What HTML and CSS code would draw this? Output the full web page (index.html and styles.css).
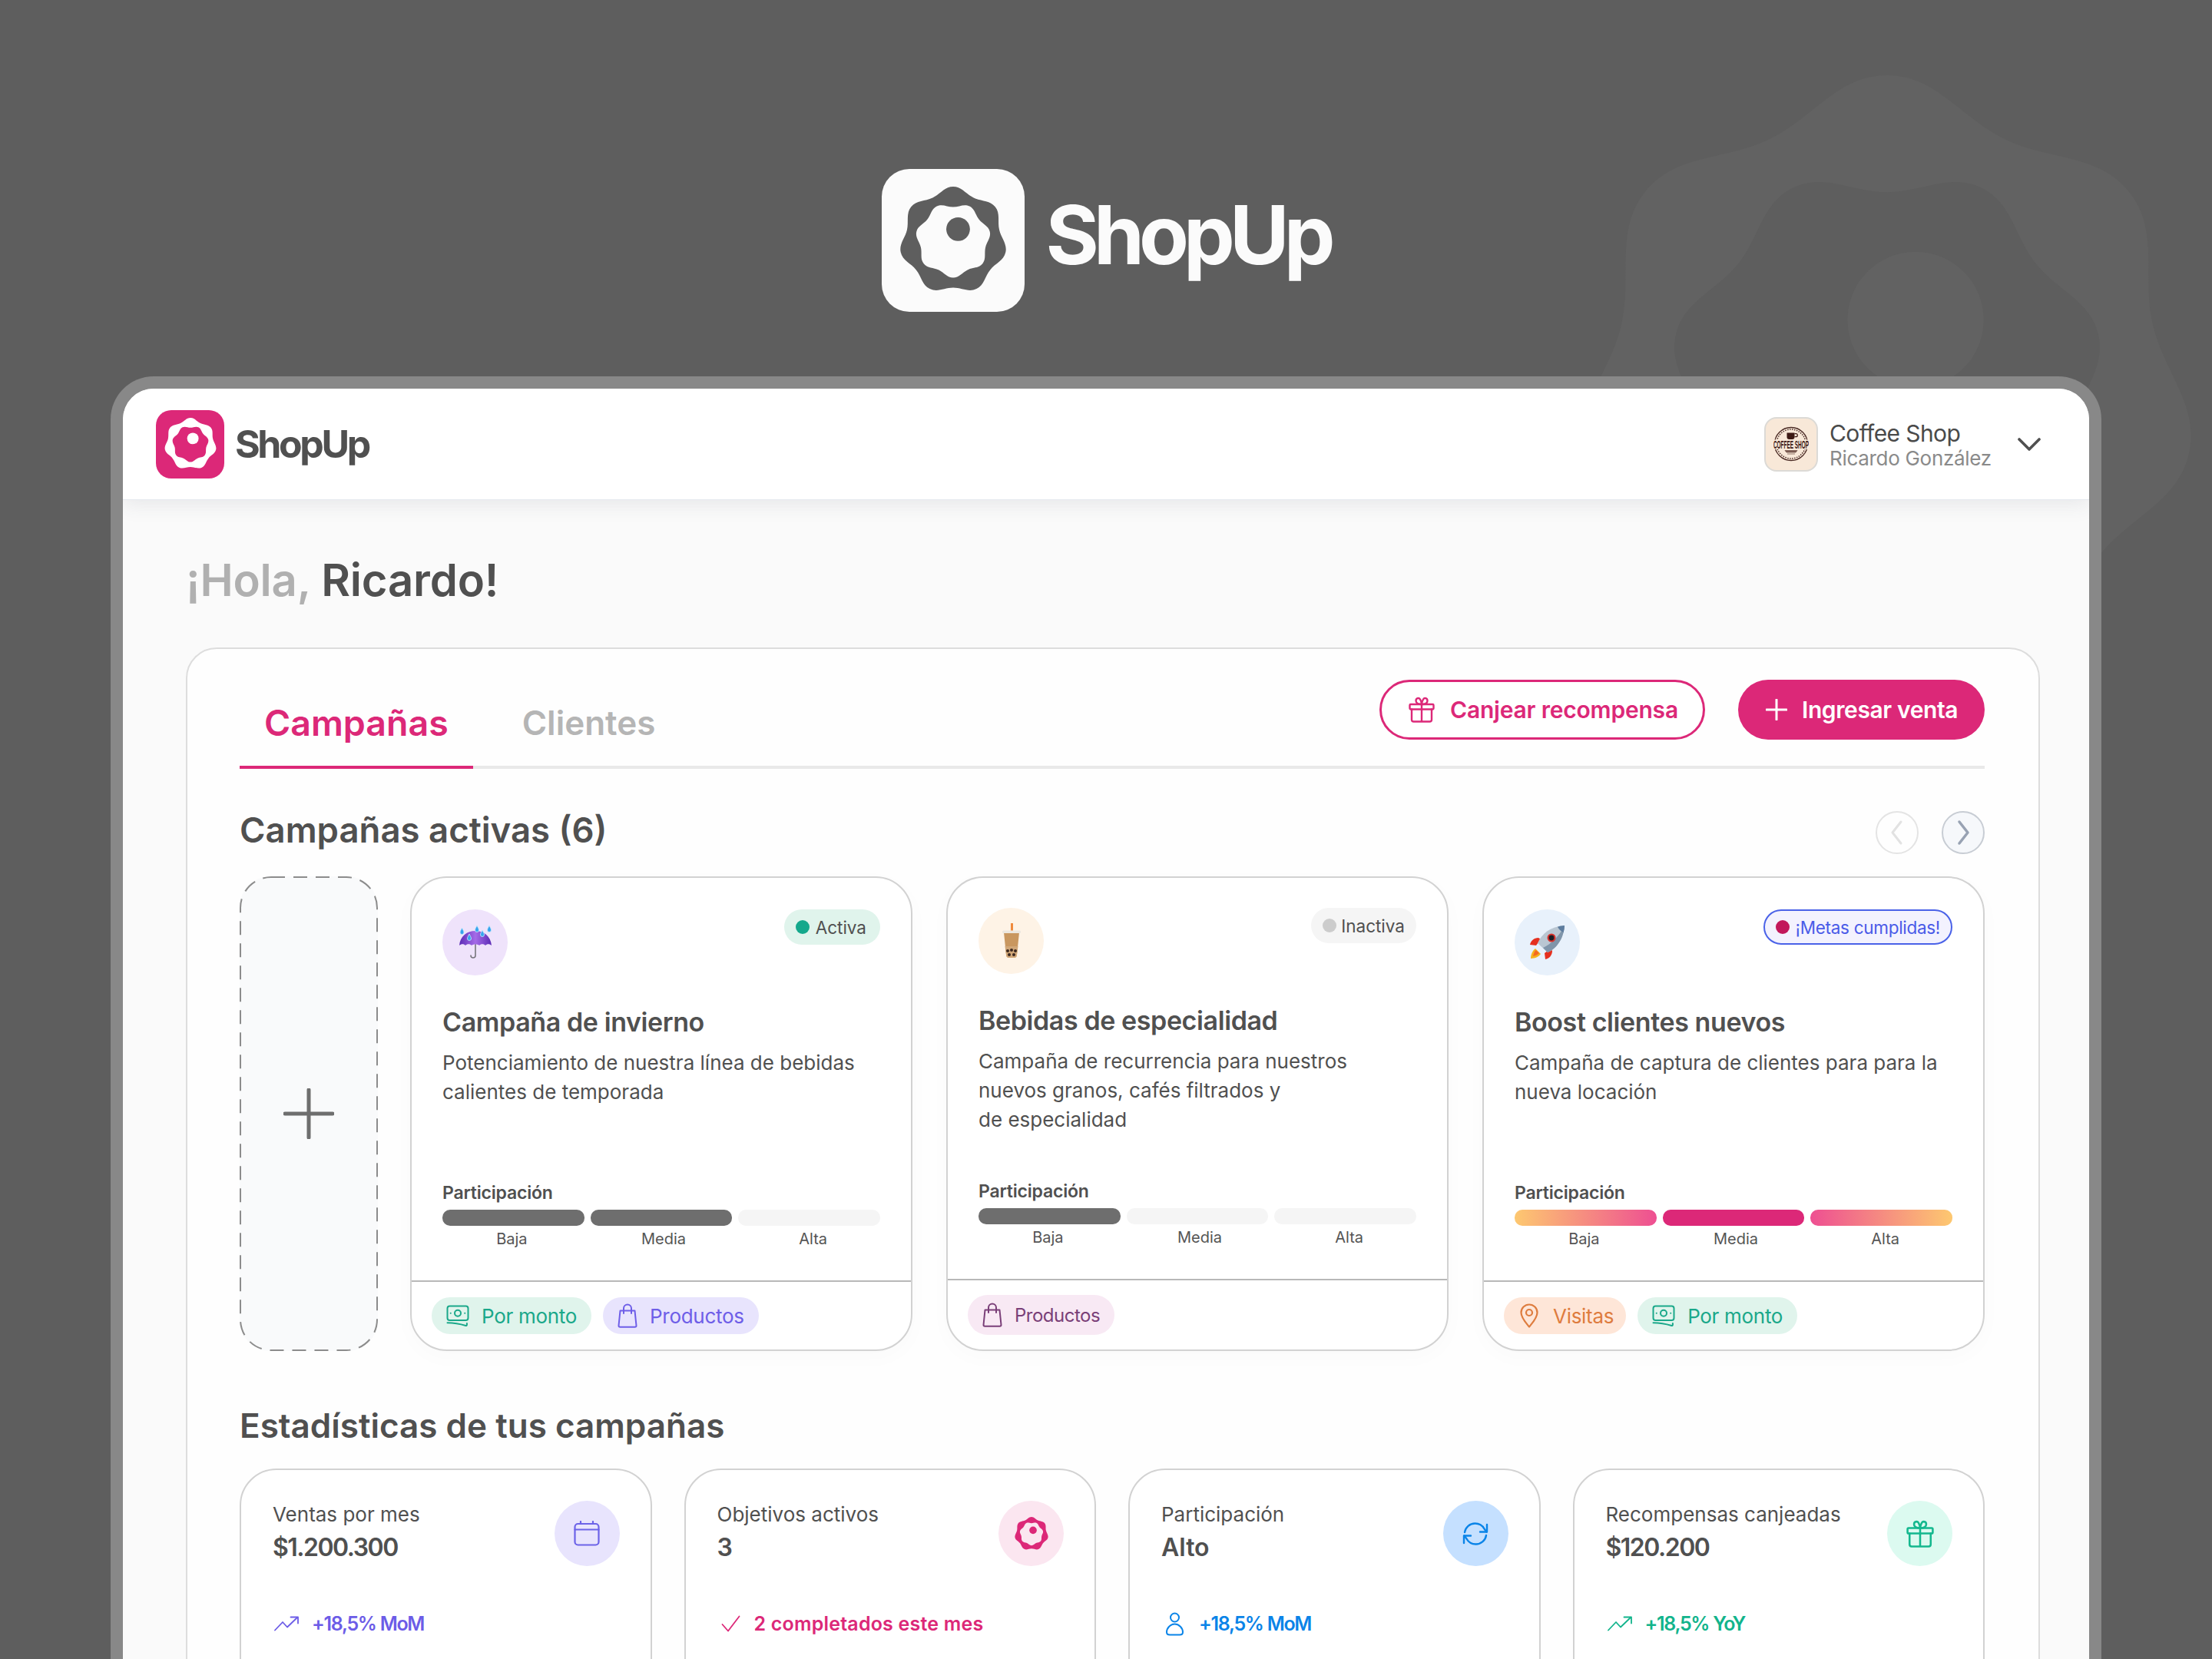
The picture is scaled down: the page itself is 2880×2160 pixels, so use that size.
FILE: index.html
```html
<!DOCTYPE html>
<html lang="es">
<head>
  <meta charset="UTF-8">
  <meta name="viewport" content="width=device-width, initial-scale=1.0">
  <title>ShopUp</title>
  <link rel="stylesheet" href="styles.css">
</head>
<body>
  <svg class="sprites" width="0" height="0">
    <defs>
      <path id="flowerShape" d="M50 0C58 0 61.88 6.89 69.09 10.36C76.3 13.83 84.1 12.57 89.09 18.82C94.08 25.07 91.12 32.41 92.9 40.21C94.68 48.01 100.53 53.33 98.75 61.13C96.97 68.93 89.39 71.18 84.4 77.43C79.41 83.68 78.91 91.58 71.7 95.05C64.49 98.52 58 94 50 94C42 94 35.51 98.52 28.3 95.05C21.09 91.58 20.59 83.68 15.6 77.43C10.61 71.18 3.03 68.93 1.25 61.13C-.53 53.33 5.32 48.01 7.1 40.21C8.88 32.41 5.92 25.07 10.91 18.82C15.9 12.57 23.7 13.83 30.91 10.36C38.12 6.89 42 0 50 0Z"/>
      <symbol id="flower" viewBox="0 0 100 100">
        <use href="#flowerShape" fill="currentColor"/>
        <use href="#flowerShape" class="flower-inner" transform="translate(50 49.7) rotate(180) scale(.7) translate(-50 -50)"/>
        <circle cx="54.6" cy="39.5" r="11" fill="currentColor"/>
      </symbol>
      <symbol id="gift" viewBox="0 0 34 34">
        <g fill="none" stroke="currentColor" stroke-width="2.4" stroke-linejoin="round" stroke-linecap="round">
          <rect x="1.5" y="10" width="31" height="6.5" rx="1.2"/>
          <path d="M4 16.500V30a2.500 2.500 0 0 0 2.500 2.500h21A2.500 2.500 0 0 0 30 30V16.500M17 10v22.500"/>
          <path d="M17 10C13 10 9.500 8.500 9.500 5.200S13.500 1 15 3.500 17 10 17 10ZM17 10c4 0 7.500-1.500 7.500-4.800S20.500 1 19 3.500 17 10 17 10Z"/>
        </g>
      </symbol>
      <symbol id="money" viewBox="0 0 30 29">
        <g fill="none" stroke="currentColor" stroke-width="2" stroke-linecap="round" stroke-linejoin="round">
          <rect x="1.500" y="1.500" width="27" height="18.500" rx="3"/>
          <circle cx="15" cy="10.700" r="4"/>
          <path d="M5.700 10.700h.1M24.200 10.700h.1M1.500 23.200c8 0 16 1.300 24 3.800.8.200 1.400-.4 1.400-1.300v-1.700"/>
        </g>
      </symbol>
      <symbol id="bag" viewBox="0 0 26 32">
        <g fill="none" stroke="currentColor" stroke-width="2" stroke-linecap="round" stroke-linejoin="round">
          <path d="M3.500 9.500h19l2 19.500a1.800 1.800 0 0 1-1.800 1.800H3.300A1.800 1.800 0 0 1 1.500 29Z"/>
          <path d="M8 13V6.500a5 5 0 0 1 10 0V13"/>
        </g>
      </symbol>
      <symbol id="pin" viewBox="0 0 24 32">
        <g fill="none" stroke="currentColor" stroke-width="2.200" stroke-linejoin="round">
          <path d="M12 30.500C8 25.500 1.500 19 1.500 12a10.500 10.500 0 0 1 21 0C22.500 19 16 25.500 12 30.500Z"/>
          <circle cx="12" cy="12" r="4"/>
        </g>
      </symbol>
      <symbol id="trend" viewBox="0 0 33 20">
        <g fill="none" stroke="currentColor" stroke-width="1.800" stroke-linecap="round" stroke-linejoin="round">
          <path d="M1 18.500 11 8l6 6.500L30 2"/>
          <path d="M21.500 1.500H31v8"/>
        </g>
      </symbol>
    </defs>
  </svg>

  <svg class="watermark"><use href="#flower"/></svg>

  <header class="hero">
    <div class="hero-tile"><svg class="hero-flower"><use href="#flower"/></svg></div>
    <span class="hero-word">ShopUp</span>
  </header>

  <div class="frame">
    <div class="topbar">
      <div class="brand">
        <div class="brand-tile"><svg class="brand-flower"><use href="#flower"/></svg></div>
        <span class="brand-word">ShopUp</span>
      </div>
      <div class="account">
        <div class="avatar">
          <svg viewBox="0 0 46 46" width="46" height="46">
            <circle cx="23" cy="23" r="21.500" fill="none" stroke="#4a2a24" stroke-width="1.300"/>
            <circle cx="23" cy="23" r="19" fill="none" stroke="#4a2a24" stroke-width="1.500" stroke-dasharray="1.500 1.500"/>
            <rect x="0" y="17.500" width="46" height="12.500" fill="#f8e8d8"/>
            <path d="M17.500 8.500h10v5.500a3 3 0 0 1-3 3h-4a3 3 0 0 1-3-3Z" fill="#3d1a14"/>
            <path d="M27.500 9.700h1.800a1.800 1.800 0 0 1 0 4h-1.800" fill="none" stroke="#3d1a14" stroke-width="1.200"/>
            <text class="avatar-text" text-anchor="middle" transform="translate(23 28.500) scale(.46 1)">COFFEE SHOP</text>
            <path d="M15 31.500h16l-2 2.500h-12ZM18 36h10" fill="#7a5a50" stroke="#7a5a50" stroke-width=".8"/>
          </svg>
        </div>
        <div class="account-text">
          <div class="account-shop">Coffee Shop</div>
          <div class="account-user">Ricardo González</div>
        </div>
        <svg class="account-chevron" viewBox="0 0 30 17"><path d="M2 2 15 15 28 2" fill="none" stroke="currentColor" stroke-width="3.600" stroke-linecap="round" stroke-linejoin="round"/></svg>
      </div>
    </div>

    <main class="content">
      <h1 class="greeting"><span class="greeting-soft">¡Hola,</span> Ricardo!</h1>

      <section class="panel">
        <div class="tabbar">
          <nav class="tabs">
            <a class="tab tab-active">Campañas</a>
            <a class="tab">Clientes</a>
          </nav>
          <div class="actions">
            <button class="btn btn-outline"><svg class="btn-gift"><use href="#gift"/></svg>Canjear recompensa</button>
            <button class="btn btn-solid">
              <svg class="btn-plus" viewBox="0 0 28 28"><path d="M14 1v26M1 14h26" fill="none" stroke="currentColor" stroke-width="3" stroke-linecap="round"/></svg>
              Ingresar venta
            </button>
          </div>
        </div>

        <div class="section-head">
          <h2 class="section-title campaigns-title">Campañas activas (6)</h2>
          <div class="pager">
            <span class="pager-btn pager-off"><svg viewBox="0 0 20 34"><path d="M15 3 4 17l11 14" fill="none" stroke="currentColor" stroke-width="3" stroke-linecap="round" stroke-linejoin="round"/></svg></span>
            <span class="pager-btn pager-on"><svg viewBox="0 0 20 34"><path d="M5 3l11 14L5 31" fill="none" stroke="currentColor" stroke-width="3.500" stroke-linecap="round" stroke-linejoin="round"/></svg></span>
          </div>
        </div>

        <div class="campaigns">
          <div class="add-card">
            <svg class="add-border"><rect x="1" y="1" width="178" height="616" rx="40" ry="40"/></svg>
            <svg class="add-plus" viewBox="0 0 66 66"><path d="M33 2v62M2 33h62" fill="none" stroke="currentColor" stroke-width="5" stroke-linecap="round"/></svg>
          </div>

          <article class="card">
            <div class="card-body">
              <div class="card-top">
                <div class="emoji emoji-purple">
                  <svg viewBox="0 0 44 44" width="44" height="44">
                    <defs><linearGradient id="umb" x1="0" y1="0" x2="1" y2="0"><stop offset="0" stop-color="#5b2bb5"/><stop offset=".5" stop-color="#a56be8"/><stop offset="1" stop-color="#5b2bb5"/></linearGradient></defs>
                    <path d="M22 24v15a3 3 0 0 1-6 0" fill="none" stroke="#77757c" stroke-width="1.600" stroke-linecap="round"/>
                    <path d="M1 26C2 14 11 7 22 7s20 7 21 19c-2.500-2.500-6-2.500-8 0-2-2.500-6-2.500-8 0-1.500-2-8.500-2-10 0-2-2.500-6-2.500-8 0-2-2.500-5.500-2.500-8 0Z" fill="url(#umb)"/>
                    <g fill="#35a4ee" stroke="#cdeafc" stroke-width=".8">
                      <path d="M4.500 3C3 6 2 7.500 2 9a2.500 2.500 0 0 0 5 0c0-1.500-1-3-2.500-6Z"/>
                      <path d="M24 0c-1.500 3-2.500 4.500-2.500 6a2.500 2.500 0 0 0 5 0c0-1.500-1-3-2.500-6Z"/>
                      <path d="M40 0c-1.500 3-2.500 4.500-2.500 6a2.500 2.500 0 0 0 5 0c0-1.500-1-3-2.500-6Z"/>
                      <path d="M14 11c-1.500 3-2.500 4.500-2.500 6a2.500 2.500 0 0 0 5 0c0-1.500-1-3-2.500-6Z"/>
                      <path d="M31 6c-1.500 3-2.500 4.500-2.500 6a2.500 2.500 0 0 0 5 0c0-1.500-1-3-2.500-6Z"/>
                    </g>
                  </svg>
                </div>
                <span class="status status-on"><i class="status-dot"></i>Activa</span>
              </div>
              <h3 class="card-title">Campaña de invierno</h3>
              <p class="card-desc">Potenciamiento de nuestra línea de bebidas<br>calientes de temporada</p>
              <div class="meter">
                <div class="meter-title">Participación</div>
                <div class="meter-bars"><span class="bar bar-gray"></span><span class="bar bar-gray"></span><span class="bar"></span></div>
                <div class="meter-labels"><span>Baja</span><span>Media</span><span>Alta</span></div>
              </div>
            </div>
            <div class="card-foot">
              <span class="tag tag-green"><svg class="tag-money"><use href="#money"/></svg>Por monto</span>
              <span class="tag tag-violet"><svg class="tag-bag"><use href="#bag"/></svg>Productos</span>
            </div>
          </article>

          <article class="card card-mid">
            <div class="card-body">
              <div class="card-top">
                <div class="emoji emoji-peach">
                  <svg viewBox="0 0 24 46" width="24" height="46">
                    <path d="M11 0h3v10h-3Z" fill="#f08a3c"/>
                    <path d="M2 12h20l-3 29a4 4 0 0 1-4 4H9a4 4 0 0 1-4-4Z" fill="#c9975f"/>
                    <path d="M3.500 30h17l-1.500 11a4 4 0 0 1-4 4H9a4 4 0 0 1-4-4Z" fill="#d1a778"/>
                    <g fill="#3b2820"><circle cx="7" cy="36" r="2"/><circle cx="12" cy="35" r="2"/><circle cx="17" cy="36" r="2"/><circle cx="9" cy="41" r="2"/><circle cx="15" cy="41" r="2"/></g>
                    <rect x="0" y="9.500" width="24" height="3.500" rx="1.500" fill="#ece7df"/>
                  </svg>
                </div>
                <span class="status status-off"><i class="status-dot"></i>Inactiva</span>
              </div>
              <h3 class="card-title">Bebidas de especialidad</h3>
              <p class="card-desc">Campaña de recurrencia para nuestros<br>nuevos granos, cafés filtrados y<br>de especialidad</p>
              <div class="meter">
                <div class="meter-title">Participación</div>
                <div class="meter-bars"><span class="bar bar-gray"></span><span class="bar"></span><span class="bar"></span></div>
                <div class="meter-labels"><span>Baja</span><span>Media</span><span>Alta</span></div>
              </div>
            </div>
            <div class="card-foot">
              <span class="tag tag-plum"><svg class="tag-bag"><use href="#bag"/></svg>Productos</span>
            </div>
          </article>

          <article class="card">
            <div class="card-body">
              <div class="card-top">
                <div class="emoji emoji-blue">
                  <svg viewBox="0 0 47 46" width="47" height="46">
                    <path d="M9 27 1 26c1-5 5-9 11-9l3 2ZM20 37l1 8c5-1 9-5 9-11l-2-3Z" fill="#e5301e"/>
                    <path d="M8 31c-3 2-6 7-6 13 6 0 11-3 13-6Z" fill="#f6b21c"/>
                    <path d="M9 33c-2 1-3 4-4 8 4-1 6-2 8-4Z" fill="#f46a20"/>
                    <path d="M11 24C17 10 30 2 46 1c-1 16-9 29-22 35Z" fill="#b9c6d2"/>
                    <path d="M46 1c-1 16-9 29-22 35l-6-6C30 24 40 13 46 1Z" fill="#7f95aa"/>
                    <path d="M46 1c-.2 3-.6 6-1.300 9-3-1-6-4-7.700-7.300C39.800 1.700 43 1.200 46 1Z" fill="#5d7c9e"/>
                    <circle cx="29" cy="17" r="5.500" fill="#d8302a"/>
                    <circle cx="29" cy="17" r="3.400" fill="#1d1d24"/>
                  </svg>
                </div>
                <span class="status status-goal"><i class="status-dot"></i>¡Metas cumplidas!</span>
              </div>
              <h3 class="card-title">Boost clientes nuevos</h3>
              <p class="card-desc">Campaña de captura de clientes para para la<br>nueva locación</p>
              <div class="meter">
                <div class="meter-title">Participación</div>
                <div class="meter-bars"><span class="bar bar-warm-l"></span><span class="bar bar-pink"></span><span class="bar bar-warm-r"></span></div>
                <div class="meter-labels"><span>Baja</span><span>Media</span><span>Alta</span></div>
              </div>
            </div>
            <div class="card-foot">
              <span class="tag tag-orange"><svg class="tag-pin"><use href="#pin"/></svg>Visitas</span>
              <span class="tag tag-green"><svg class="tag-money"><use href="#money"/></svg>Por monto</span>
            </div>
          </article>
        </div>

        <h2 class="section-title stats-title">Estadísticas de tus campañas</h2>

        <div class="stats">
          <div class="stat stat-violet">
            <div class="stat-top">
              <div>
                <div class="stat-label">Ventas por mes</div>
                <div class="stat-value">$1.200.300</div>
              </div>
              <div class="stat-icon">
                <svg viewBox="0 0 34 33" width="34" height="33"><g fill="none" stroke="currentColor" stroke-width="2.200" stroke-linecap="round" stroke-linejoin="round"><rect x="1.500" y="4" width="31" height="27.500" rx="4"/><path d="M1.500 11.500h31M9 1v3M25 1v3"/></g></svg>
              </div>
            </div>
            <div class="stat-foot"><svg class="foot-trend"><use href="#trend"/></svg>+18,5% MoM</div>
          </div>

          <div class="stat stat-pink">
            <div class="stat-top">
              <div>
                <div class="stat-label">Objetivos activos</div>
                <div class="stat-value">3</div>
              </div>
              <div class="stat-icon"><svg class="stat-flower"><use href="#flower"/></svg></div>
            </div>
            <div class="stat-foot"><svg class="foot-check" viewBox="0 0 25 22"><path d="M1.500 12 9 20.500 23.500 1.500" fill="none" stroke="currentColor" stroke-width="1.800" stroke-linecap="round" stroke-linejoin="round"/></svg>2 completados este mes</div>
          </div>

          <div class="stat stat-blue">
            <div class="stat-top">
              <div>
                <div class="stat-label">Participación</div>
                <div class="stat-value">Alto</div>
              </div>
              <div class="stat-icon">
                <svg viewBox="0 0 34 30" width="34" height="30"><g fill="none" stroke="currentColor" stroke-width="2.400" stroke-linecap="round" stroke-linejoin="round"><path d="M3 13C4 6.500 9.500 1.500 16.500 1.500c5 0 9.500 2.500 12 7l3 4"/><path d="M32 3v9.500h-9"/><path d="M31 17c-1 6.500-6.500 11.500-13.500 11.500-5 0-9.500-2.500-12-7l-3-4"/><path d="M2 27v-9.500h9"/></g></svg>
              </div>
            </div>
            <div class="stat-foot"><svg class="foot-user" viewBox="0 0 25 31"><g fill="none" stroke="currentColor" stroke-width="2" stroke-linejoin="round"><circle cx="12.500" cy="7" r="5.500"/><path d="M12.500 15.500c5.500 0 10.500 5 10.500 10.500 0 2.500-2 3.500-4 3.500H6c-2 0-4-1-4-3.500 0-5.500 5-10.500 10.500-10.500Z"/></g></svg>+18,5% MoM</div>
          </div>

          <div class="stat stat-green">
            <div class="stat-top">
              <div>
                <div class="stat-label">Recompensas canjeadas</div>
                <div class="stat-value">$120.200</div>
              </div>
              <div class="stat-icon"><svg class="stat-gift"><use href="#gift"/></svg></div>
            </div>
            <div class="stat-foot"><svg class="foot-trend"><use href="#trend"/></svg>+18,5% YoY</div>
          </div>
        </div>
      </section>
    </main>
  </div>
</body>
</html>
```

FILE: styles.css
```css
html, body {
  margin: 0;
  height: 2160px;
  overflow: hidden;
}

body {
  position: relative;
  background: #5e5e5e;
  font-family: Inter, "Liberation Sans", sans-serif;
  color: #505050;
}

.sprites {
  position: absolute;
}

.watermark {
  position: absolute;
  left: 2054px;
  top: 98px;
  width: 806px;
  height: 806px;
  color: #626262;
  --tile: #5e5e5e;
}

.flower-inner {
  fill: var(--tile);
}

/* hero logo */
.hero {
  position: relative;
  height: 270px;
  padding-top: 220px;
  display: flex;
  justify-content: center;
  align-items: flex-start;
  gap: 27px;
}

.hero-tile {
  width: 186px;
  height: 186px;
  border-radius: 36px;
  background: #fbfbfb;
  display: flex;
  align-items: center;
  justify-content: center;
}

.hero-flower {
  width: 140px;
  height: 140px;
  color: #5e5e5e;
  --tile: #fbfbfb;
}

.hero-word {
  font-size: 106px;
  font-weight: 700;
  letter-spacing: -6.900px;
  line-height: 186px;
  color: #fbfbfb;
  margin-top: -7px;
}

/* frame */
.frame {
  position: relative;
  width: 2560px;
  height: 1700px;
  margin-left: 144px;
  border: 16px solid #888888;
  border-bottom: 0;
  border-radius: 56px 56px 0 0;
  background: #fafafa;
  overflow: hidden;
}

.topbar {
  position: relative;
  height: 145px;
  box-sizing: border-box;
  padding: 0 63px 0 43px;
  background: #fff;
  border-bottom: 1px solid #e6eaf0;
  box-shadow: 0 6px 24px rgba(60, 70, 90, 0.1);
  display: flex;
  justify-content: space-between;
  align-items: center;
}

.brand {
  display: flex;
  align-items: center;
  gap: 14px;
}

.brand-tile {
  width: 89px;
  height: 89px;
  border-radius: 20px;
  background: #dc2878;
  display: flex;
  align-items: center;
  justify-content: center;
}

.brand-flower {
  width: 68px;
  height: 68px;
  color: #fff;
  --tile: #dc2878;
}

.brand-word {
  font-size: 50px;
  font-weight: 700;
  letter-spacing: -3.400px;
}

.account {
  display: flex;
  align-items: center;
}

.avatar {
  width: 70px;
  height: 71px;
  box-sizing: border-box;
  border: 2px solid #dcdad6;
  border-radius: 16px;
  background: #f8e8d8;
  display: flex;
  align-items: center;
  justify-content: center;
}

.avatar-text {
  font-family: "Liberation Sans", sans-serif;
  font-size: 14px;
  font-weight: 700;
  fill: #3d1a14;
}

.account-text {
  margin-left: 15px;
  padding-top: 4px;
  width: 245px;
}

.account-shop {
  font-size: 30px;
  line-height: 34px;
  letter-spacing: -0.600px;
  color: #4a4a4a;
}

.account-user {
  font-size: 26px;
  line-height: 32px;
  letter-spacing: -0.300px;
  color: #8a8a8a;
}

.account-chevron {
  width: 30px;
  height: 17px;
  color: #505050;
}

/* content */
.content {
  padding: 0 64px 0 82px;
}

.greeting {
  margin: 0;
  height: 192px;
  box-sizing: border-box;
  padding-top: 70px;
  font-size: 58px;
  line-height: 68px;
  font-weight: 600;
  letter-spacing: -0.200px;
}

.greeting-soft {
  color: #b0b0b0;
}

.panel {
  height: 1400px;
  box-sizing: border-box;
  padding: 0 70px 0 68px;
  background: #fefefe;
  border: 2px solid #dddddd;
  border-radius: 40px;
}

.tabbar {
  height: 156px;
  box-sizing: border-box;
  border-bottom: 4px solid #e9e9e9;
  display: flex;
  justify-content: space-between;
}

.tabs {
  display: flex;
  gap: 32px;
  align-items: flex-end;
}

.tab {
  padding: 0 32px 26px;
  margin-bottom: -4px;
  border-bottom: 4px solid transparent;
  font-size: 44px;
  line-height: 60px;
  font-weight: 600;
  color: #b5b5b5;
}

.tab-active {
  font-size: 46.500px;
  color: #dc2878;
  border-bottom-color: #dc2878;
}

.actions {
  display: flex;
  gap: 43px;
  padding-top: 40px;
  align-items: flex-start;
}

.btn {
  height: 78px;
  box-sizing: border-box;
  border-radius: 39px;
  font-family: inherit;
  font-size: 30px;
  font-weight: 600;
  display: flex;
  align-items: center;
}

.btn-outline {
  width: 424px;
  padding: 0 0 0 35px;
  gap: 20px;
  letter-spacing: -0.200px;
  background: #fff;
  color: #dc2878;
  border: 3px solid #dc2878;
}

.btn-gift {
  width: 34px;
  height: 34px;
}

.btn-solid {
  width: 321px;
  padding: 0 0 0 36px;
  gap: 19px;
  letter-spacing: -0.400px;
  background: #dc2878;
  color: #fff;
  border: 0;
}

.btn-plus {
  width: 28px;
  height: 28px;
}

.section-head {
  margin-top: 55px;
  display: flex;
  justify-content: space-between;
  align-items: center;
  height: 56px;
}

.section-title {
  margin: 0;
  font-size: 44px;
  line-height: 56px;
  font-weight: 600;
  color: #505050;
}

.campaigns-title {
  font-size: 45.500px;
  margin-top: -7px;
}

.pager {
  display: flex;
  gap: 30px;
}

.pager-btn {
  width: 56px;
  height: 56px;
  box-sizing: border-box;
  border-radius: 50%;
  border: 2px solid #e4e4e4;
  display: flex;
  align-items: center;
  justify-content: center;
}

.pager-btn svg {
  width: 20px;
  height: 34px;
}

.pager-off {
  color: #e2e2e2;
}

.pager-on {
  color: #98a2b3;
  background: #f6f8fb;
  border-color: #c8cdd4;
}

/* campaign cards */
.campaigns {
  margin-top: 29px;
  display: flex;
  gap: 44px;
}

.add-card {
  position: relative;
  width: 180px;
  height: 618px;
  margin-right: -2px;
  border-radius: 40px;
  background: #f9fafb;
  display: flex;
  align-items: center;
  justify-content: center;
}

.add-border {
  position: absolute;
  inset: 0;
  width: 100%;
  height: 100%;
}

.add-border rect {
  fill: none;
  stroke: #8c8c8c;
  stroke-width: 2;
  stroke-dasharray: 18 11;
}

.add-plus {
  width: 66px;
  height: 66px;
  color: #6e6e6e;
}

.card {
  width: 654px;
  height: 618px;
  box-sizing: border-box;
  background: #fff;
  border: 2px solid #d2d2d2;
  border-radius: 48px;
  box-shadow: 0 8px 30px rgba(0, 0, 0, 0.02);
  display: flex;
  flex-direction: column;
}

.card-body {
  flex: 1;
  padding: 41px 40px 0;
  display: flex;
  flex-direction: column;
}

.card-mid .card-body {
  padding-top: 39px;
}

.card-top {
  display: flex;
  justify-content: space-between;
  align-items: flex-start;
}

.emoji {
  width: 85px;
  height: 86px;
  border-radius: 50%;
  display: flex;
  align-items: center;
  justify-content: center;
}

.emoji-purple { background: #efe3fb; }
.emoji-peach { background: #fef3e6; }
.emoji-blue { background: #e8f1fb; }

.status {
  height: 46px;
  box-sizing: border-box;
  padding: 0 18px 0 15px;
  border-radius: 23px;
  display: flex;
  align-items: center;
  gap: 8px;
  font-size: 22.500px;
  color: #505050;
}

.status-dot {
  width: 18px;
  height: 18px;
  border-radius: 50%;
}

.status-on { background: #e0f4ec; }
.status-on .status-dot { background: #14a88c; }
.status-off { background: #f5f5f5; padding: 0 15px; gap: 6px; }
.status-off .status-dot { background: #cccccc; }

.status-goal {
  background: #f3f2fe;
  border: 2px solid #4a62e8;
  color: #4a5be8;
  gap: 8px;
  padding: 0 14px;
  letter-spacing: -0.300px;
}

.status-goal .status-dot { background: #c2185b; }

.card-title {
  margin: 39px 0 0;
  font-size: 34px;
  line-height: 44px;
  font-weight: 600;
  letter-spacing: -0.400px;
  color: #505050;
}

.card-desc {
  margin: 12px 0 0;
  font-size: 26px;
  line-height: 38px;
  color: #505050;
}

.meter {
  margin-top: auto;
  padding-bottom: 41px;
}

.meter-title {
  font-size: 23px;
  line-height: 30px;
  font-weight: 600;
  letter-spacing: -0.200px;
}

.meter-bars {
  margin-top: 7px;
  display: grid;
  grid-template-columns: repeat(3, 1fr);
  gap: 8px;
}

.bar {
  height: 21px;
  border-radius: 10px;
  background: #f5f5f5;
}

.bar-gray { background: #6e6e6e; }
.bar-pink { background: #dc2878; }
.bar-warm-l { background: linear-gradient(90deg, #fdc870, #ee4f92); }
.bar-warm-r { background: linear-gradient(90deg, #ee4f92, #fdc870); }

.meter-labels {
  margin-top: 4px;
  display: grid;
  grid-template-columns: repeat(3, 1fr);
  gap: 8px;
  text-align: center;
  font-size: 20px;
  line-height: 26px;
  color: #555555;
}

.meter-labels span:nth-child(1) { padding-right: 4px; }
.meter-labels span:nth-child(2) { padding-left: 6px; }
.meter-labels span:nth-child(3) { padding-left: 10px; }

.card-foot {
  height: 88px;
  border-top: 2px solid #b8b8b8;
  padding: 0 26px;
  display: flex;
  align-items: center;
  gap: 15px;
}

.card-mid .card-foot {
  height: 90px;
}

.tag {
  height: 48px;
  padding: 0 19px;
  border-radius: 24px;
  display: flex;
  align-items: center;
  gap: 16px;
  font-size: 26px;
  letter-spacing: -0.300px;
}

.tag-green { background: #e0f4ec; color: #1aa88a; }
.tag-violet { background: #e8e4fd; color: #6e5ee8; }
.tag-plum { height: 52px; border-radius: 26px; background: #f8e9f4; color: #7a3f78; font-size: 24px; letter-spacing: -0.500px; }
.tag-orange { background: #fee6d8; color: #de7c3e; padding-right: 16px; }

.tag-money { width: 30px; height: 29px; }
.tag-bag { width: 26px; height: 32px; }
.tag-pin { width: 24px; height: 32px; margin: 0 3px 0 2px; }

/* stats */
.stats-title {
  margin-top: 69px;
}

.stats {
  margin-top: 28px;
  display: grid;
  grid-template-columns: repeat(4, 1fr);
  gap: 42px;
}

.stat {
  height: 300px;
  box-sizing: border-box;
  padding: 40px 40px 0 41px;
  background: #fff;
  border: 2px solid #d2d2d2;
  border-radius: 48px;
}

.stat-top {
  display: flex;
  justify-content: space-between;
  height: 120px;
}

.stat-label {
  margin-top: -1px;
  font-size: 26px;
  line-height: 38px;
  color: #505050;
}

.stat-value {
  margin-top: 2px;
  font-size: 32px;
  line-height: 44px;
  font-weight: 600;
  letter-spacing: -1.500px;
  color: #505050;
}

.stat-blue .stat-value {
  letter-spacing: 0;
}

.stat-icon {
  width: 85px;
  height: 85px;
  border-radius: 50%;
  display: flex;
  align-items: center;
  justify-content: center;
}

.stat-foot {
  margin-top: 24px;
  height: 32px;
  display: flex;
  align-items: center;
  gap: 16px;
  font-size: 25px;
  font-weight: 600;
  letter-spacing: -1.300px;
}

.stat-violet .stat-icon { background: #e8e4fd; color: #6c63e8; }
.stat-violet .stat-foot { color: #6c5ce7; }
.stat-pink .stat-icon { background: #fbe6f0; color: #dc2878; --tile: #fbe6f0; }
.stat-pink .stat-foot { color: #dc2878; letter-spacing: 0.200px; }
.stat-blue .stat-icon { background: #c5e0ff; color: #0a84e8; }
.stat-blue .stat-foot { color: #0a84e8; }
.stat-green .stat-icon { background: #dcfaf0; color: #14b88e; }
.stat-green .stat-foot { color: #12b48c; }

.stat-flower { width: 44px; height: 44px; }
.stat-gift { width: 36px; height: 36px; }
.foot-trend { width: 33px; height: 20px; margin-left: 2px; }
.foot-check { width: 25px; height: 22px; margin: 0 2px 0 5px; }
.foot-user { width: 25px; height: 31px; margin: 0 3px 0 5px; }
```
